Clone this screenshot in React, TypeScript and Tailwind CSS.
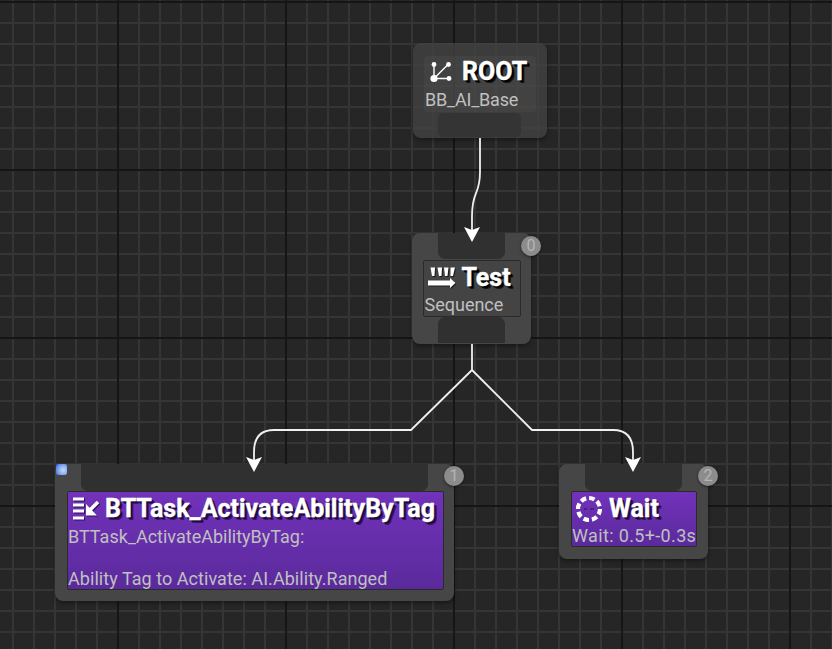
import React from "react";

const titleClass =
  "font-['Roboto',sans-serif] font-bold text-[25px] leading-[28px] text-white whitespace-nowrap [-webkit-text-stroke:0.4px_white]";
const subClass = "font-['Roboto',sans-serif] text-[18px] leading-[21px] text-[#c0c0c0] whitespace-nowrap";
const darkShadow = "[text-shadow:2px_2px_0_#000,3px_3px_0_#000a]";
const purpleShadow = "[text-shadow:2px_2px_0_#1f0b3f,3px_3px_0_#1f0b3faa]";

function RootIcon() {
  return (
    <svg width="24" height="24" viewBox="0 0 24 24" fill="none" stroke="#fff" strokeWidth="1.4">
      <path d="M5 18.5L19 4.5M5 18.5L5 4.5M5 18.5L20 18.5" />
      <circle cx="5" cy="18.5" r="3.6" fill="#fff" stroke="none" />
      <circle cx="5" cy="4.5" r="2.4" fill="#fff" stroke="none" />
      <circle cx="19.5" cy="4.5" r="2.4" fill="#fff" stroke="none" />
      <circle cx="20" cy="18.5" r="2.4" fill="#fff" stroke="none" />
    </svg>
  );
}

function SequenceIcon() {
  return (
    <svg width="28" height="24" viewBox="0 0 28 24" fill="#fff" style={{ filter: "drop-shadow(1px 1px 0 #1a1a1a)" }}>
      <path d="M2.500 1.500h4.500l-.5 8.500H4zM9.500 1.500h4.500l-.5 8.500H11zM16 1.500h4.500l-1 8.500H17zM22.500 1.500H27l-2 8.500h-2.500z" />
      <path d="M0 14.500h22v-2.500l5.500 5-5.500 5v-2.500H0z" />
    </svg>
  );
}

function TaskIcon() {
  return (
    <svg width="28" height="28" viewBox="0 0 28 28" fill="none" stroke="#fff" style={{ filter: "drop-shadow(1px 1px 0 #2a1050)" }}>
      <path d="M1 4h11M1 10h11M1 16h11M1 23h11" strokeWidth="3.2" />
      <path d="M26 7L18 15" strokeWidth="3.6" />
      <path d="M14 9v11.500h11z" fill="#fff" stroke="none" />
    </svg>
  );
}

function WaitIcon() {
  return (
    <svg width="28" height="28" viewBox="0 0 28 28" fill="none">
      <circle cx="14" cy="14" r="11" stroke="#fff" strokeWidth="4.2" strokeDasharray="5.6 3" />
      <path d="M9 14h3M15 14h4" stroke="#2c1258" strokeWidth="1" />
    </svg>
  );
}

function Badge({ n, className }: { n: number; className: string }) {
  return (
    <div
      className={
        "absolute w-[20px] h-[20px] rounded-full bg-[#8c8c8c] shadow-[0_1px_3px_#0008] flex items-center justify-center font-['Roboto',sans-serif] text-[16px] text-[#b4b4b4] " +
        className
      }
    >
      {n}
    </div>
  );
}

function Wires() {
  return (
    <svg className="absolute inset-0" width="832" height="649" fill="none" stroke="#f0f0f0" strokeWidth="1.8">
      <path d="M480 138V172C480 196 472 190 472 216V230" />
      <path d="M472 344V370L411 430H274C260 430 254 438 254 452V460" />
      <path d="M472 370L532 430H613C627 430 633 438 633 452V460" />
      <path d="M464 227L472 230 480 227 472 242z" fill="#fff" stroke="none" />
      <path d="M246 457L254 460 262 457 254 472z" fill="#fff" stroke="none" />
      <path d="M625 457L633 460 641 457 633 472z" fill="#fff" stroke="none" />
    </svg>
  );
}

export default function App() {
  return (
    <div className="relative w-[832px] h-[649px] overflow-hidden bg-[#262626]">
      {/* minor grid */}
      <div className="absolute inset-0 bg-[linear-gradient(to_right,#353535_2px,transparent_2px),linear-gradient(to_bottom,#353535_2px,transparent_2px)] bg-[size:21px_21px] bg-[position:12px_1px]" />
      {/* major grid */}
      <div className="absolute inset-0 bg-[linear-gradient(to_right,#151515_2px,transparent_2px),linear-gradient(to_bottom,#151515_2px,transparent_2px)] bg-[size:168px_168px] bg-[position:117px_1px]" />

      {/* ROOT */}
      <div className="absolute left-[413px] top-[43px] w-[134px] h-[95px] rounded-[8px] bg-[#424242cc] shadow-[0_2px_4px_#0006] flex flex-col pl-[11px] pt-[13px]">
        <div className="w-[112px] h-[56px] rounded-[3px] bg-[#ffffff08] flex flex-col">
          <div className="flex items-center gap-[9px] pl-[5px] h-[31px]">
            <RootIcon />
            <span className={titleClass + " " + darkShadow}>ROOT</span>
          </div>
          <span className={subClass + " pl-[1px] mt-[2px] text-[#b0b0b0] tracking-[-0.2px]"}>BB_AI_Base</span>
        </div>
        <div className="w-[83px] h-[24px] ml-[14px] mt-[1px] rounded-[5px] bg-[#333333e0]" />
      </div>

      {/* Test */}
      <div className="absolute left-[412px] top-[233px] w-[119px] h-[111px] rounded-[8px] bg-[#464646] shadow-[0_2px_4px_#0006] flex flex-col items-center">
        <div className="w-[67px] h-[26px] rounded-b-[7px] bg-[#303030]" />
        <div className="w-[98px] h-[57px] mt-[1px] rounded-[2px] border border-[#2a2a2a] bg-[#444444] flex flex-col">
          <div className="flex items-center gap-[6px] pl-[4px] h-[33px]">
            <SequenceIcon />
            <span className={titleClass + " " + darkShadow}>Test</span>
          </div>
          <span className={subClass + " pl-[1px]"}>Sequence</span>
        </div>
        <div className="w-[67px] h-[26px] rounded-t-[7px] bg-[#303030]" />
      </div>
      <Badge n={0} className="left-[521px] top-[236px]" />

      {/* BTTask_ActivateAbilityByTag */}
      <div className="absolute left-[55px] top-[464px] w-[399px] h-[137px] rounded-[8px] bg-[#464646] shadow-[0_2px_4px_#0006] flex flex-col pl-[12px]">
        <div className="w-[347px] h-[27px] ml-[14px] rounded-b-[7px] bg-[#303030]" />
        <div className="w-[377px] h-[99px] rounded-[2px] border border-[#2a2a2a] bg-[linear-gradient(to_bottom,#7232bb,#5a2a9b)] flex flex-col">
          <div className="flex items-center gap-[5px] pl-[4px] h-[34px]">
            <TaskIcon />
            <span className={titleClass + " " + purpleShadow}>BTTask_ActivateAbilityByTag</span>
          </div>
          <span className={subClass}>BTTask_ActivateAbilityByTag:</span>
          <span className={subClass + " mt-[21px] tracking-[0.05px]"}>Ability Tag to Activate: AI.Ability.Ranged</span>
        </div>
      </div>
      <div className="absolute left-[56px] top-[464px] w-[11px] h-[11px] rounded-[2px] bg-[radial-gradient(circle_at_65%_55%,#c7d9fa_0%,#8db0f2_45%,#3a6be0_90%)]" />
      <Badge n={1} className="left-[444px] top-[466px]" />

      {/* Wait */}
      <div className="absolute left-[559px] top-[464px] w-[149px] h-[95px] rounded-[8px] bg-[#464646] shadow-[0_2px_4px_#0006] flex flex-col pl-[12px]">
        <div className="w-[97px] h-[27px] ml-[14px] rounded-b-[7px] bg-[#303030]" />
        <div className="w-[126px] h-[56px] rounded-[2px] border border-[#2a2a2a] bg-[linear-gradient(to_bottom,#7232bb,#5a2a9b)] flex flex-col">
          <div className="flex items-center gap-[6px] pl-[3px] h-[33px]">
            <WaitIcon />
            <span className={titleClass + " " + purpleShadow}>Wait</span>
          </div>
          <span className={subClass + " tracking-[0.35px]"}>Wait: 0.5+-0.3s</span>
        </div>
      </div>
      <Badge n={2} className="left-[698px] top-[466px]" />

      <Wires />
    </div>
  );
}
